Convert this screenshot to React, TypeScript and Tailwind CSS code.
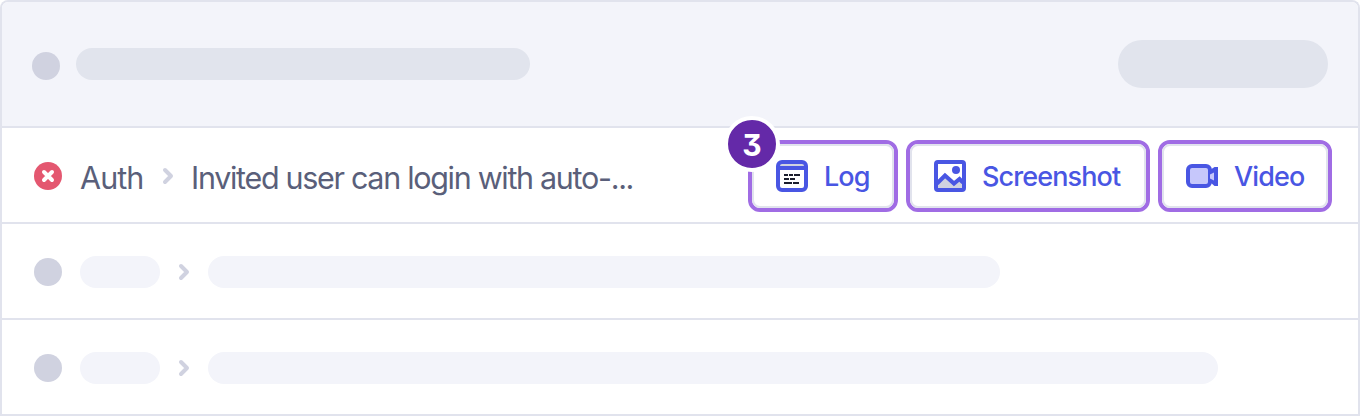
import type { ReactNode } from "react";

function Chevron() {
  return (
    <svg width="12" height="18" viewBox="0 0 12 18" fill="none" className="shrink-0">
      <path d="M3 3L9 9L3 15" stroke="#d0d2e0" strokeWidth="4" strokeLinecap="round" strokeLinejoin="round" />
    </svg>
  );
}

function FailedIcon() {
  return (
    <svg width="28" height="28" viewBox="0 0 28 28" className="shrink-0">
      <circle cx="14" cy="14" r="14" fill="#e45770" />
      <path d="M10 10L18 18M18 10L10 18" stroke="#fff" strokeWidth="4" strokeLinecap="round" />
    </svg>
  );
}

function LogIcon() {
  return (
    <svg width="32" height="32" viewBox="0 0 32 32" fill="none" className="shrink-0">
      <rect x="2" y="2" width="28" height="28" rx="4" fill="#fff" />
      <path d="M4 4h24v3H4z" fill="#d0d2e0" />
      <rect x="2" y="2" width="28" height="28" rx="4" stroke="#4956e3" strokeWidth="4" />
      <path d="M3 8h26" stroke="#4956e3" strokeWidth="4" />
      <path
        d="M8 15h4M13 15h4M18 15h6M8 19h5M14 19h5M8 23h8M17 23h6"
        stroke="#1b1e2e"
        strokeWidth="2"
      />
    </svg>
  );
}

function ScreenshotIcon() {
  return (
    <svg width="32" height="32" viewBox="0 0 32 32" fill="none" className="shrink-0">
      <path d="M3 24L11 15.5L20 24L25.5 19.5L29 23V29H3z" fill="#d0d2e0" />
      <path d="M3 23.5L11 15.5L20 23.5L25.5 19L29 22.5" stroke="#4956e3" strokeWidth="4" />
      <circle cx="22" cy="10" r="4" fill="#4956e3" />
      <rect x="2" y="2" width="28" height="28" rx="2" stroke="#4956e3" strokeWidth="4" />
    </svg>
  );
}

function VideoIcon() {
  return (
    <svg width="32" height="32" viewBox="0 0 32 32" fill="none" className="shrink-0">
      <path d="M24 10L28.5 7H32V26H28.5L24 22z" fill="#4956e3" />
      <rect x="2" y="6" width="22" height="20" rx="4" fill="#c6c7fb" stroke="#4956e3" strokeWidth="4" />
      <path d="M24 14.5L28 12.5V20.5L24 18.5z" fill="#c6c7fb" />
    </svg>
  );
}

function Artifact({ icon, children, width }: { icon: ReactNode; children: ReactNode; width: string }) {
  return (
    <div className={`h-[72px] shrink-0 rounded-xl border-4 border-[#a06ce4] ${width}`}>
      <div className="flex h-full items-center gap-4 rounded-lg border-2 border-[#e1e3ed] pl-[22px] text-[27px] font-medium tracking-[-0.9px] text-[#4956e3]">
        {icon}
        <span className="pt-0.5">{children}</span>
      </div>
    </div>
  );
}

function PlaceholderRow({ width }: { width: string }) {
  return (
    <div className="flex h-24 items-center border-b-2 border-[#e1e3ed] pt-0.5 pl-8">
      <div className="size-7 rounded-full bg-[#d0d2e0]" />
      <div className="ml-[18px] h-8 w-20 rounded-full bg-[#f3f4fa]" />
      <div className="ml-[18px] flex">
        <Chevron />
      </div>
      <div className={`ml-[18px] h-8 rounded-full bg-[#f3f4fa] ${width}`} />
    </div>
  );
}

export default function App() {
  return (
    <div className="h-[416px] w-[1360px] overflow-hidden rounded-t-lg border-x-2 border-t-2 border-[#e1e3ed] bg-white font-['Inter','Liberation_Sans',sans-serif]">
      <div className="flex h-[126px] items-center border-b-2 border-[#e1e3ed] bg-[#f3f4fa] pr-[30px] pl-[30px]">
        <div className="mt-1 size-7 rounded-full bg-[#d0d2e0]" />
        <div className="ml-4 h-8 w-[454px] rounded-full bg-[#e1e4ed]" />
        <div className="ml-auto h-12 w-[210px] rounded-full bg-[#e1e4ed]" />
      </div>

      <div className="flex h-24 items-center border-b-2 border-[#e1e3ed] pt-0.5 pr-[26px] pl-8 whitespace-nowrap">
        <FailedIcon />
        <div className="ml-[18px] w-[82px] pt-[3px] text-[30.5px] tracking-[-0.9px] text-[#5a5f7a]">Auth</div>
        <Chevron />
        <div className="ml-[17px] pt-[3px] text-[30.5px] tracking-[-1.31px] text-[#5a5f7a]">
          Invited user can login with auto-...
        </div>
        <div className="relative ml-auto flex gap-2">
          <Artifact icon={<LogIcon />} width="w-[150px]">
            Log
          </Artifact>
          <Artifact icon={<ScreenshotIcon />} width="w-[244px]">
            Screenshot
          </Artifact>
          <Artifact icon={<VideoIcon />} width="w-[174px]">
            Video
          </Artifact>
          <div className="absolute -top-6 -left-6 flex size-14 items-center justify-center rounded-full border-4 border-white bg-[#6429a8] pt-[3px] text-[30px] font-bold text-white [font-feature-settings:'cv09']">
            3
          </div>
        </div>
      </div>

      <PlaceholderRow width="w-[792px]" />
      <PlaceholderRow width="w-[1010px]" />
    </div>
  );
}
